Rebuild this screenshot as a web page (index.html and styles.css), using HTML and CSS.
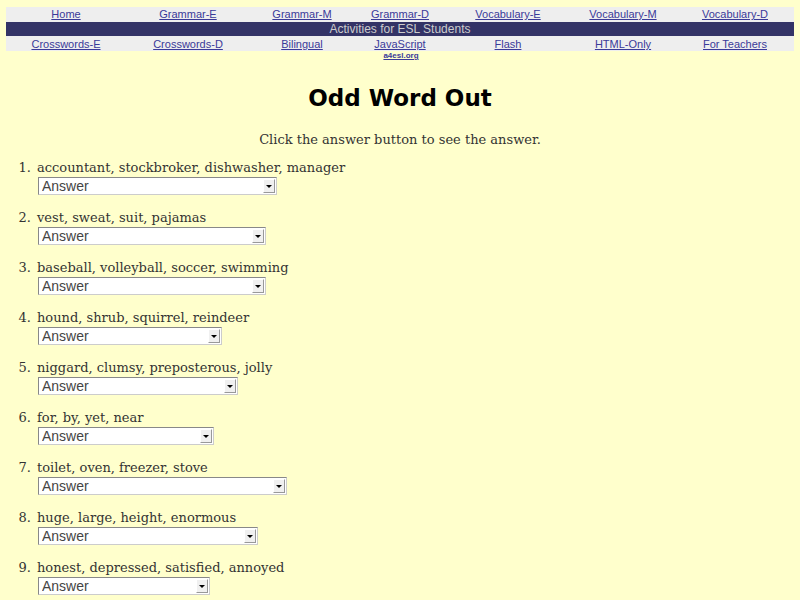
FILE: index.html
```html
<!DOCTYPE html>
<html>
<head>
<meta charset="utf-8">
<title>Odd Word Out</title>
<link rel="stylesheet" href="styles.css">
</head>
<body>
<div class="nav">
  <div class="navrow">
    <a href="#">Home</a><a href="#">Grammar-E</a><a href="#">Grammar-M</a><a href="#">Grammar-D</a><a href="#">Vocabulary-E</a><a href="#">Vocabulary-M</a><a href="#">Vocabulary-D</a>
  </div>
  <div class="banner">Activities for ESL Students</div>
  <div class="navrow">
    <a href="#">Crosswords-E</a><a href="#">Crosswords-D</a><a href="#">Bilingual</a><a href="#">JavaScript</a><a href="#">Flash</a><a href="#">HTML-Only</a><a href="#">For Teachers</a>
  </div>
</div>
<div class="site"><a href="#">a4esl.org</a></div>

<h1 class="title">Odd Word Out</h1>
<p class="intro">Click the answer button to see the answer.</p>

<ol class="quiz">
  <li><div class="q">accountant, stockbroker, dishwasher, manager</div><span class="sel w239"><select><option>Answer</option></select></span></li>
  <li><div class="q">vest, sweat, suit, pajamas</div><span class="sel w228"><select><option>Answer</option></select></span></li>
  <li><div class="q">baseball, volleyball, soccer, swimming</div><span class="sel w228"><select><option>Answer</option></select></span></li>
  <li><div class="q">hound, shrub, squirrel, reindeer</div><span class="sel w184"><select><option>Answer</option></select></span></li>
  <li><div class="q">niggard, clumsy, preposterous, jolly</div><span class="sel w200"><select><option>Answer</option></select></span></li>
  <li><div class="q">for, by, yet, near</div><span class="sel w176"><select><option>Answer</option></select></span></li>
  <li><div class="q">toilet, oven, freezer, stove</div><span class="sel w249"><select><option>Answer</option></select></span></li>
  <li><div class="q">huge, large, height, enormous</div><span class="sel w220"><select><option>Answer</option></select></span></li>
  <li><div class="q">honest, depressed, satisfied, annoyed</div><span class="sel w172"><select><option>Answer</option></select></span></li>
</ol>
</body>
</html>
```
FILE: styles.css
```css
html, body {
  margin: 0;
  padding: 0;
  background: #ffffcc;
}
body {
  font-family: "DejaVu Serif", serif;
  color: #333;
}
.nav {
  margin: 7px 6px 0 6px;
}
.navrow {
  display: grid;
  grid-template-columns: 120fr 124fr 104fr 92fr 124fr 106fr 118fr;
  background: #eeeeee;
  height: 14px;
  align-items: center;
}
.navrow a {
  text-align: center;
  font-family: "Liberation Sans", Arial, sans-serif;
  font-size: 11px;
  line-height: 14px;
  color: #3a3a99;
  text-decoration: underline;
}
.banner {
  background: #333366;
  color: #cccccc;
  font-family: "Liberation Sans", Arial, sans-serif;
  font-size: 12px;
  line-height: 14px;
  text-align: center;
  border-top: 1px solid #eeeeee;
  border-bottom: 1px solid #eeeeee;
}
.site {
  text-align: center;
  font-family: "Liberation Sans", Arial, sans-serif;
  font-size: 8px;
  font-weight: bold;
  line-height: 10px;
  padding-left: 2px;
}
.site a {
  color: #3a3a99;
}
.title {
  margin: 22px 0 0 0;
  text-align: center;
  font-family: "DejaVu Sans", sans-serif;
  font-weight: bold;
  font-size: 23px;
  line-height: 30px;
  color: #000;
}
.intro {
  margin: 18px 0 0 0;
  text-align: center;
  font-size: 13px;
  line-height: 17px;
}
.quiz {
  margin: 11px 0 0 0;
  padding: 0;
  list-style: none;
  counter-reset: item;
  font-size: 13px;
}
.quiz li {
  counter-increment: item;
  display: grid;
  grid-template-columns: 31px auto;
  column-gap: 6px;
  margin-bottom: 14px;
}
.quiz li::before {
  content: counter(item) ".";
  text-align: right;
  line-height: 17px;
  grid-row: 1;
}
.q {
  line-height: 17px;
  grid-column: 2;
}
.sel {
  display: block;
  position: relative;
  grid-column: 2;
  margin-top: 1px;
  margin-left: 1px;
  height: 18px;
}
.sel select {
  appearance: none;
  -webkit-appearance: none;
  width: 100%;
  height: 18px;
  box-sizing: border-box;
  margin: 0;
  padding: 0 0 0 3px;
  background: #fff;
  border-top: 1px solid #888;
  border-left: 1px solid #888;
  border-right: 1px solid #ccc;
  border-bottom: 1px solid #ccc;
  border-radius: 0;
  font-family: "Liberation Sans", Arial, sans-serif;
  font-size: 14px;
  color: #444;
}
.sel::after {
  content: "";
  position: absolute;
  right: 2px;
  top: 2px;
  width: 10px;
  height: 12px;
  background: #f0f0f0;
  border: 1px solid;
  border-color: #fff #999 #999 #fff;
  pointer-events: none;
}
.sel::before {
  content: "";
  position: absolute;
  right: 5px;
  top: 8px;
  width: 0;
  height: 0;
  border-left: 3px solid transparent;
  border-right: 3px solid transparent;
  border-top: 3px solid #000;
  z-index: 1;
  pointer-events: none;
}
.w239 { width: 239px; }
.w228 { width: 228px; }
.w184 { width: 184px; }
.w200 { width: 200px; }
.w176 { width: 176px; }
.w249 { width: 249px; }
.w220 { width: 220px; }
.w172 { width: 172px; }
```
